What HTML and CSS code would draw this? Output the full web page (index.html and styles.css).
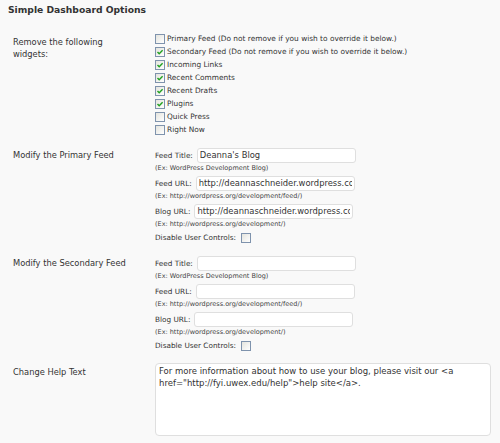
FILE: index.html
```html
<!DOCTYPE html>
<html>
<head>
<meta charset="utf-8">
<link rel="stylesheet" href="styles.css">
</head>
<body>
<div class="wrap">
  <h2 class="title">Simple Dashboard Options</h2>
  <div class="form">
    <div class="row">
      <div class="label label-remove">Remove the following widgets:</div>
      <ul class="checks">
        <li><span class="cb"></span>Primary Feed (Do not remove if you wish to override it below.)</li>
        <li><span class="cb"><svg viewBox="0 0 8 8" class="tick"><path d="M1.5 4 L3.2 5.8 L6.6 2.2" /></svg></span>Secondary Feed (Do not remove if you wish to override it below.)</li>
        <li><span class="cb"><svg viewBox="0 0 8 8" class="tick"><path d="M1.5 4 L3.2 5.8 L6.6 2.2" /></svg></span>Incoming Links</li>
        <li><span class="cb"><svg viewBox="0 0 8 8" class="tick"><path d="M1.5 4 L3.2 5.8 L6.6 2.2" /></svg></span>Recent Comments</li>
        <li><span class="cb"><svg viewBox="0 0 8 8" class="tick"><path d="M1.5 4 L3.2 5.8 L6.6 2.2" /></svg></span>Recent Drafts</li>
        <li><span class="cb"><svg viewBox="0 0 8 8" class="tick"><path d="M1.5 4 L3.2 5.8 L6.6 2.2" /></svg></span>Plugins</li>
        <li><span class="cb"></span>Quick Press</li>
        <li><span class="cb"></span>Right Now</li>
      </ul>
    </div>

    <div class="row">
      <div class="label">Modify the Primary Feed</div>
      <div class="fields">
        <div class="line"><span class="flabel">Feed Title:</span><input class="text" type="text" value="Deanna's Blog"></div>
        <div class="ex">(Ex: WordPress Development Blog)</div>
        <div class="line"><span class="flabel">Feed URL:</span><input class="text" type="text" value="http://deannaschneider.wordpress.com/feed/"></div>
        <div class="ex">(Ex: http://wordpress.org/development/feed/)</div>
        <div class="line"><span class="flabel">Blog URL:</span><input class="text" type="text" value="http://deannaschneider.wordpress.com/"></div>
        <div class="ex">(Ex: http://wordpress.org/development/)</div>
        <div class="line line-cb"><span class="flabel">Disable User Controls:</span><span class="cb"></span></div>
      </div>
    </div>

    <div class="row">
      <div class="label">Modify the Secondary Feed</div>
      <div class="fields">
        <div class="line"><span class="flabel">Feed Title:</span><input class="text" type="text" value=""></div>
        <div class="ex">(Ex: WordPress Development Blog)</div>
        <div class="line"><span class="flabel">Feed URL:</span><input class="text" type="text" value=""></div>
        <div class="ex">(Ex: http://wordpress.org/development/feed/)</div>
        <div class="line"><span class="flabel">Blog URL:</span><input class="text" type="text" value=""></div>
        <div class="ex">(Ex: http://wordpress.org/development/)</div>
        <div class="line line-cb"><span class="flabel">Disable User Controls:</span><span class="cb"></span></div>
      </div>
    </div>

    <div class="row">
      <div class="label label-help">Change Help Text</div>
      <div class="fields">
        <textarea class="area">For more information about how to use your blog, please visit our &lt;a href="http://fyi.uwex.edu/help"&gt;help site&lt;/a&gt;.</textarea>
      </div>
    </div>
  </div>
</div>
</body>
</html>
```

FILE: styles.css
```css
html, body {
  margin: 0;
  padding: 0;
  background: #f9f9f9;
}

body {
  font-family: "DejaVu Sans", Verdana, sans-serif;
  color: #333;
}

.wrap {
  padding: 4px 0 0 8px;
}

.title {
  margin: 0 0 11px 0;
  font-size: 9.2px;
  line-height: 12px;
  font-weight: bold;
  color: #333;
}

.row {
  display: grid;
  grid-template-columns: 142px 1fr;
  padding: 5px 0 5px 5px;
}

.row + .row {
  padding-top: 6px;
}

.label {
  font-size: 8.3px;
  line-height: 12px;
  padding-top: 2px;
  color: #333;
}

.label-remove {
  padding-top: 4px;
  max-width: 100px;
}

.label-help {
  padding-top: 3px;
}

.checks {
  list-style: none;
  margin: 0;
  padding: 0;
}

.checks li {
  display: flex;
  align-items: center;
  height: 13px;
  font-size: 7.4px;
  color: #333;
}

.cb {
  box-sizing: border-box;
  width: 10px;
  height: 10px;
  border: 1px solid #7f93ad;
  background: linear-gradient(135deg, #e4e4de, #ffffff);
  margin-right: 2px;
  flex: none;
  display: flex;
  align-items: center;
  justify-content: center;
}

.tick {
  width: 8px;
  height: 8px;
  fill: none;
  stroke: #21a121;
  stroke-width: 1.4;
}

.fields {
  display: flex;
  flex-direction: column;
}

.line {
  display: flex;
  align-items: center;
  height: 16px;
  gap: 4px;
}

.line-cb {
  height: 13px;
  gap: 5px;
}

.flabel {
  font-size: 7.3px;
  color: #333;
}

.text {
  box-sizing: border-box;
  width: 159px;
  height: 15px;
  margin: 0;
  padding: 0 2px;
  border: 1px solid #dfdfdf;
  border-radius: 3px;
  background: #fff;
  font-family: "DejaVu Sans", Verdana, sans-serif;
  font-size: 8.4px;
  color: #333;
  outline: none;
}

.ex {
  font-size: 6.5px;
  line-height: 10px;
  height: 12px;
  color: #444;
}

.area {
  box-sizing: border-box;
  display: block;
  width: 336px;
  height: 73px;
  margin: 0;
  padding: 2px 3px;
  border: 1px solid #dfdfdf;
  border-radius: 4px;
  background: #fff;
  font-family: "DejaVu Sans", Verdana, sans-serif;
  font-size: 8.5px;
  line-height: 11.6px;
  color: #333;
  resize: none;
  outline: none;
}
```
